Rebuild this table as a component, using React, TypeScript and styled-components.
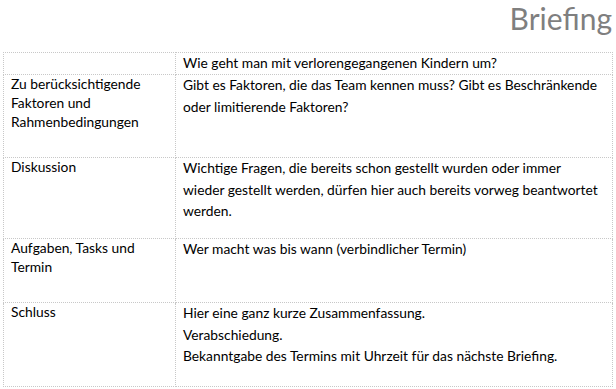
import * as React from 'react';
import styled, { createGlobalStyle } from 'styled-components';

interface Row {
  label: string[];
  text: string[];
  height: number;
}

const rows: Row[] = [
  { label: [], text: ['Wie geht man mit verlorengegangenen Kindern um?'], height: 22 },
  {
    label: ['Zu berücksichtigende', 'Faktoren und', 'Rahmenbedingungen'],
    text: ['Gibt es Faktoren, die das Team kennen muss? Gibt es Beschränkende', 'oder limitierende Faktoren?'],
    height: 83,
  },
  {
    label: ['Diskussion'],
    text: [
      'Wichtige Fragen, die bereits schon gestellt wurden oder immer',
      'wieder gestellt werden, dürfen hier auch bereits vorweg beantwortet',
      'werden.',
    ],
    height: 81,
  },
  {
    label: ['Aufgaben, Tasks und', 'Termin'],
    text: ['Wer macht was bis wann (verbindlicher Termin)'],
    height: 64,
  },
  {
    label: ['Schluss'],
    text: [
      'Hier eine ganz kurze Zusammenfassung.',
      'Verabschiedung.',
      'Bekanntgabe des Termins mit Uhrzeit für das nächste Briefing.',
    ],
    height: 84,
  },
];

const App: React.FC = () => (
  <Page>
    <GlobalStyle />
    <Title>Briefing</Title>
    <Table>
      <tbody>
        {rows.map((row, i) => (
          <TableRow key={i} $height={row.height}>
            <LabelCell>
              <CellBody>
                {row.label.map((line) => (
                  <Line key={line}>{line}</Line>
                ))}
              </CellBody>
            </LabelCell>
            <TextCell>
              <CellBody>
                {row.text.map((line) => (
                  <Line key={line}>{line}</Line>
                ))}
              </CellBody>
            </TextCell>
          </TableRow>
        ))}
      </tbody>
    </Table>
  </Page>
);

const GlobalStyle = createGlobalStyle`
  body {
    margin: 0;
    background: #ffffff;
    font-family: Lato, "Liberation Sans", sans-serif;
    color: #000000;
  }
`;

const Page = styled.div`
  width: 616px;
  height: 389px;
  padding: 0 3px 0 3px;
  box-sizing: border-box;
  overflow: hidden;
`;

const Title = styled.h1`
  margin: 0;
  padding: 0 1px 0 0;
  height: 52px;
  text-align: right;
  font-size: 30px;
  font-weight: 400;
  line-height: 36px;
  color: #7f7f7f;
`;

const Table = styled.table`
  width: 100%;
  border-collapse: collapse;
  table-layout: fixed;
  font-size: 13.8px;
`;

const TableRow = styled.tr<{ $height: number }>`
  height: ${(p) => p.$height}px;
`;

const Cell = styled.td`
  border: 1px dotted #c8c8c8;
  vertical-align: top;
  padding: 0 7px;
  white-space: nowrap;
  overflow: hidden;
`;

const LabelCell = styled(Cell)`
  width: 157px;
  padding-top: 1px;
  line-height: 18.8px;
`;

const TextCell = styled(Cell)`
  line-height: 21.5px;
`;

const CellBody = styled.div`
  margin-top: -1px;
`;

const Line = styled.div``;

export default App;
